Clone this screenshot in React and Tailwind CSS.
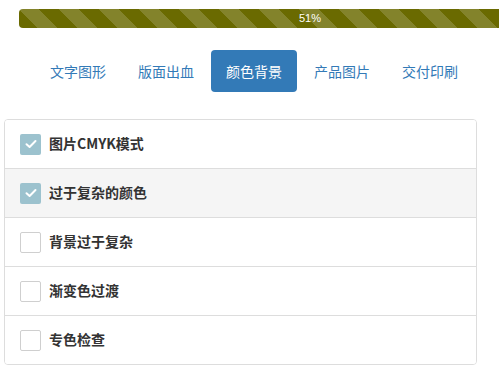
import React from "react";

const tabs = ["文字图形", "版面出血", "颜色背景", "产品图片", "交付印刷"];
const items = [
  { label: "图片CMYK模式", checked: true },
  { label: "过于复杂的颜色", checked: true, shaded: true },
  { label: "背景过于复杂", checked: false },
  { label: "渐变色过渡", checked: false },
  { label: "专色检查", checked: false },
];

function Check({ checked }) {
  if (checked) {
    return (
      <div className="w-[21px] h-[21px] rounded-[2px] bg-[#9cc2ce] flex items-center justify-center shrink-0">
        <svg width="12" height="10" viewBox="0 0 12 10" fill="none">
          <path d="M1.5 5.2 L4.6 8 L10.5 2" stroke="white" strokeWidth="2" strokeLinecap="round" strokeLinejoin="round" />
        </svg>
      </div>
    );
  }
  return <div className="w-[21px] h-[21px] rounded-[2px] border border-[#cfcfcf] bg-white shrink-0" />;
}

export default function App() {
  return (
    <div
      className="w-[499px] h-[376px] overflow-hidden bg-white"
      style={{ fontFamily: '"Noto Sans CJK SC", "Liberation Sans", sans-serif' }}
    >
      <div className="pt-[9px]">
        <div className="ml-[19px] w-[582px] h-[19px] rounded-[4px] overflow-hidden bg-[#6a6a00] bg-[linear-gradient(45deg,rgba(255,255,255,0.17)_25%,transparent_25%,transparent_50%,rgba(255,255,255,0.17)_50%,rgba(255,255,255,0.17)_75%,transparent_75%,transparent)] bg-[length:40px_40px] text-center text-white text-[11px] leading-[19px] font-['Liberation_Sans',sans-serif]">
          51%
        </div>
      </div>
      <div className="flex gap-[2px] ml-[35px] mt-[22px]">
        {tabs.map((t, i) => (
          <div
            key={t}
            className={
              i === 2
                ? "px-[15px] py-[11px] leading-[20px] text-[14px] rounded-[4px] bg-[#337ab7] text-white"
                : "px-[15px] py-[11px] leading-[20px] text-[14px] rounded-[4px] text-[#337ab7]"
            }
          >
            {t}
          </div>
        ))}
      </div>
      <div className="ml-[4px] mt-[27px] w-[473px] border border-[#dddddd] rounded-[4px] overflow-hidden">
        {items.map((it, i) => (
          <div
            key={it.label}
            className={
              (i > 0 ? "border-t border-[#dddddd] " : "") +
              (it.shaded ? "bg-[#f5f5f5] " : "bg-white ") +
              "h-[48px] box-content flex items-center pl-[15px] gap-[8px]"
            }
          >
            <Check checked={it.checked} />
            <span className="text-[14px] font-bold text-[#333333] leading-[20px] -mt-[2px]">{it.label}</span>
          </div>
        ))}
      </div>
    </div>
  );
}
